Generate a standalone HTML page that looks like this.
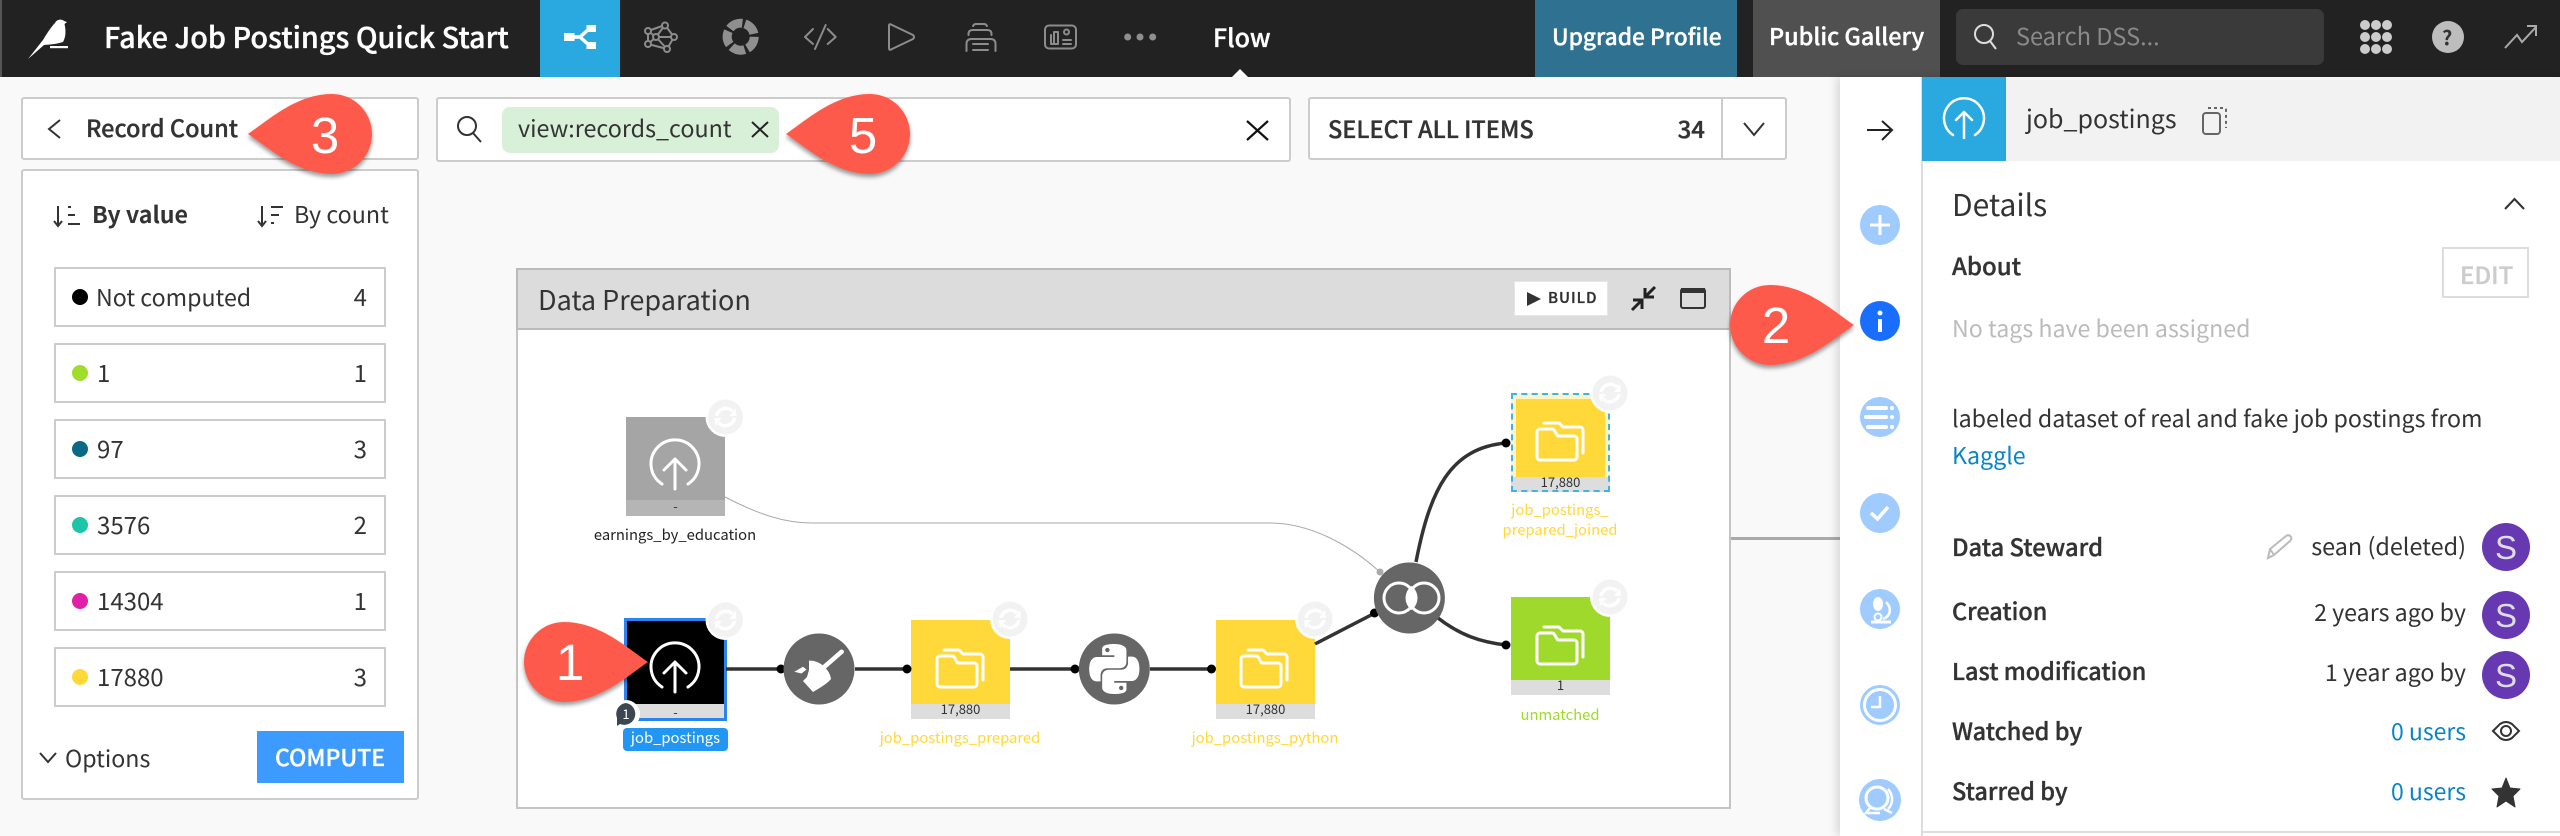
<!DOCTYPE html>
<html><head><meta charset="utf-8"><title>Fake Job Postings Quick Start</title>
<style>
html,body{margin:0;padding:0;width:2560px;height:836px;overflow:hidden;background:#f9f9f9}
body{position:relative;font-family:"Noto Sans CJK JP","Liberation Sans",sans-serif;color:#333}
.b{position:absolute;box-sizing:border-box}
.box{position:absolute;box-sizing:border-box;background:#fff;border:2px solid #ccc;border-radius:3px}
.t{position:absolute;white-space:nowrap;line-height:40px;height:40px}
.s{font-weight:500;-webkit-text-stroke:.35px currentColor}
.w{color:#fff}
svg{position:absolute;left:0;top:0}
.c{text-align:center;transform:translateX(-50%)}
.av{font-family:"Liberation Sans",sans-serif;font-size:33px;color:#ddd}
.l{font-size:14.8px}
</style></head><body>

<!-- header -->
<div class="b" style="left:0;top:0;width:2560px;height:77px;background:#222"></div>
<div class="b" style="left:0;top:0;width:2px;height:77px;background:#555"></div>
<div class="b" style="left:540px;top:0;width:80px;height:77px;background:#29a9df"></div>
<div class="b" style="left:1535px;top:0;width:202px;height:77px;background:#2e7191"></div>
<div class="b" style="left:1753px;top:0;width:187px;height:77px;background:#505050"></div>
<div class="b" style="left:1956px;top:9px;width:368px;height:56px;background:#3a3a3a;border-radius:7px"></div>

<!-- left panels -->
<div class="box" style="left:21px;top:97px;width:398px;height:63px"></div>
<div class="box" style="left:21px;top:169px;width:398px;height:631px"></div>
<div class="box" style="left:54px;top:267px;width:332px;height:60px;border-radius:0"></div>
<div class="box" style="left:54px;top:343px;width:332px;height:60px;border-radius:0"></div>
<div class="box" style="left:54px;top:419px;width:332px;height:60px;border-radius:0"></div>
<div class="box" style="left:54px;top:495px;width:332px;height:60px;border-radius:0"></div>
<div class="box" style="left:54px;top:571px;width:332px;height:60px;border-radius:0"></div>
<div class="box" style="left:54px;top:647px;width:332px;height:60px;border-radius:0"></div>
<div class="b" style="left:257px;top:731px;width:147px;height:52px;background:#3d9bff"></div>

<!-- top boxes -->
<div class="box" style="left:436px;top:97px;width:855px;height:65px"></div>
<div class="b" style="left:502px;top:107px;width:277px;height:46px;background:#d8f0d8;border-radius:8px"></div>
<div class="box" style="left:1308px;top:97px;width:479px;height:63px"></div>
<div class="b" style="left:1721px;top:98px;width:2px;height:61px;background:#ccc"></div>

<!-- flow zone -->
<div class="b" style="left:1730px;top:537px;width:110px;height:3px;background:#aaa"></div>
<div class="b" style="left:516px;top:268px;width:1215px;height:541px;background:#fff;border:2px solid #c4c4c4"></div>
<div class="b" style="left:516px;top:268px;width:1215px;height:62px;background:#dcdcdc;border:2px solid #bbb"></div>
<div class="b" style="left:1514px;top:281px;width:94px;height:35px;background:#fff;border:1px solid #e6e6e6"></div>

<!-- flow nodes -->
<div class="b" style="left:626px;top:417px;width:99px;height:83px;background:#a5a5a5"></div>
<div class="b" style="left:626px;top:500px;width:99px;height:16px;background:#b5b5b5"></div>
<div class="b" style="left:624px;top:618px;width:103px;height:103px;background:#ddd;border:3px solid #2b83f0"></div>
<div class="b" style="left:627px;top:621px;width:97px;height:83px;background:#000"></div>
<div class="b" style="left:911px;top:620px;width:99px;height:84px;background:#ffd83a"></div>
<div class="b" style="left:911px;top:704px;width:99px;height:15px;background:#ddd"></div>
<div class="b" style="left:1216px;top:620px;width:99px;height:84px;background:#ffd83a"></div>
<div class="b" style="left:1216px;top:704px;width:99px;height:15px;background:#ddd"></div>
<div class="b" style="left:1511px;top:393px;width:99px;height:99px;background:#fdf3c8"></div>
<div class="b" style="left:1516px;top:399px;width:89px;height:78px;background:#ffd83a"></div>
<div class="b" style="left:1511px;top:477px;width:99px;height:15px;background:#ddd"></div>
<div class="b" style="left:1511px;top:393px;width:99px;height:99px;border:2px dashed #3fb3e6"></div>
<div class="b" style="left:1511px;top:597px;width:99px;height:83px;background:#9fd92b"></div>
<div class="b" style="left:1511px;top:680px;width:99px;height:15px;background:#ddd"></div>
<div class="b" style="left:623px;top:728px;width:105px;height:23px;background:#2196f3;border-radius:4px"></div>

<!-- right panel -->
<div class="b" style="left:1840px;top:77px;width:720px;height:759px;background:#fff;box-shadow:-4px 0 8px rgba(0,0,0,.12)"></div>
<div class="b" style="left:1921px;top:77px;width:2px;height:759px;background:#ddd"></div>
<div class="b" style="left:1922px;top:77px;width:638px;height:84px;background:#f2f2f2"></div>
<div class="b" style="left:1922px;top:77px;width:84px;height:84px;background:#29a9df"></div>
<div class="b" style="left:2442px;top:247px;width:87px;height:51px;background:#fff;border:2px solid #ddd"></div>
<div class="b" style="left:1922px;top:831px;width:638px;height:2px;background:#ddd"></div>

<svg width="2560" height="836" viewBox="0 0 2560 836" fill="none">
<defs>
<filter id="sh" x="-20%" y="-20%" width="140%" height="140%"><feDropShadow dx="0" dy="3" stdDeviation="2" flood-color="#000" flood-opacity=".4"/></filter>
<g id="folder" fill="none" stroke="#fff" stroke-width="3" stroke-linejoin="round" stroke-linecap="round">
<path d="M26 40a3 3 0 0 1 3-3H41a3 3 0 0 1 2.5 1.5L46 43a2 2 0 0 0 2 1H63a3 3 0 0 1 3 3V65a3 3 0 0 1-3 3H29a3 3 0 0 1-3-3Z"/>
<path d="M33 31H47a3 3 0 0 1 2.5 1.5L52 35H69a3 3 0 0 1 3 3V61"/>
</g>
<g id="sync">
<circle r="20" fill="#fff"/><circle r="17.5" fill="#f2f2f2"/>
<path d="M-9 -1A9.5 9.5 0 0 1 7 -6M9 1A9.5 9.5 0 0 1 -7 6" stroke="#fff" stroke-width="3.5" fill="none"/>
<path d="M4 -1L11 -1L10 -9ZM-4 1L-11 1L-10 9Z" fill="#fff"/>
</g>
<g id="up" fill="none" stroke="#fff" stroke-width="3" stroke-linecap="round" stroke-linejoin="round">
<path d="M-13 18A24 24 0 1 1 13 18"/>
<path d="M0 23V-7M-11 4L0 -7L11 4"/>
</g>
<path id="bal" d="M84 0C62 -15 35 -40 0 -40A40 40 0 0 0 0 40C35 40 62 15 84 0Z" fill="#fe5a4c"/>
</defs>

<!-- logo -->
<path d="M28 59L43 40C47 33 52 26 55 23C57 19 62 19 64 21L67 22L64.5 24C66 30 66 37 63 42C57 44 50 44.500 44 45Z" fill="#fff"/>
<rect x="50" y="46" width="18" height="2.200" fill="#fff"/>

<!-- flow tab icon -->
<path d="M570 37H580L590 28M580 37L590 46" stroke="#fff" stroke-width="3.500"/>
<rect x="564" y="33" width="10.500" height="8" fill="#fff"/><rect x="586.500" y="25" width="9.500" height="7" fill="#fff"/><rect x="586.500" y="42" width="9.500" height="7" fill="#fff"/>

<!-- header icons -->
<g stroke="#8c8c8c" stroke-width="2" stroke-linejoin="round" stroke-linecap="round">
<path d="M648 31L665 25L674 37L667 49L648 44L648 31M656 37L665 25M656 37H674M656 37L667 49M656 37L648 31M656 37L648 44"/>
<g fill="#222"><circle cx="648" cy="31" r="3"/><circle cx="665" cy="25.500" r="3"/><circle cx="674" cy="37" r="3"/><circle cx="667" cy="49" r="3"/><circle cx="648" cy="44" r="3"/><circle cx="656" cy="37" r="3"/></g>
<path d="M813 29L805 37L813 44M827.700 29L835.700 37L827.700 44M825.700 25L815 49"/>
<path d="M889 26Q889 23 892 25L913 35Q915 37 913 39L892 49Q889 51 889 48Z"/>
<path d="M973 26Q974 24 976 24H984Q986 24 987 26M968.500 35V34Q968.500 30 972.500 30H987.500Q991.500 30 991.500 34V35M966.500 51V44Q966.500 39 971.500 39H990.500Q995.500 39 995.500 44V51M973 44H988M973 50H988"/>
<rect x="1045" y="25.500" width="31" height="23" rx="4"/>
<path d="M1051 35V44H1054M1054 44V32H1058V44H1051M1063 40H1071M1063 44H1071"/>
<circle cx="1066.500" cy="32" r="2.500"/>
</g>
<circle cx="740.700" cy="36.700" r="13.500" stroke="#8f8f8f" stroke-width="9" stroke-dasharray="14 2.960" transform="rotate(-72 740.700 36.700)"/>
<g fill="#8f8f8f"><circle cx="1127.700" cy="37" r="3.500"/><circle cx="1140" cy="37" r="3.500"/><circle cx="1152.700" cy="37" r="3.500"/></g>
<path d="M1232 77L1240 69L1248 77Z" fill="#fff"/>

<!-- right header icons -->
<circle cx="1984" cy="34" r="9" stroke="#ddd" stroke-width="2"/><path d="M1990 41L1996 49" stroke="#ddd" stroke-width="2"/>
<g fill="#ccc"><circle cx="2365" cy="25" r="5"/><circle cx="2376" cy="25" r="5"/><circle cx="2387" cy="25" r="5"/><circle cx="2365" cy="37" r="5"/><circle cx="2376" cy="37" r="5"/><circle cx="2387" cy="37" r="5"/><circle cx="2365" cy="49" r="5"/><circle cx="2376" cy="49" r="5"/><circle cx="2387" cy="49" r="5"/></g>
<circle cx="2448" cy="37" r="16" fill="#bdbdbd"/>
<path d="M2505 48L2517 35L2522 42L2536 27M2527 26H2536V36" stroke="#aaa" stroke-width="2"/>

<!-- toolbar icons -->
<path d="M60 120L49 129L60 138" stroke="#333" stroke-width="2"/>
<circle cx="467" cy="126" r="9" stroke="#333" stroke-width="2"/><path d="M473 133L481 142" stroke="#333" stroke-width="2"/>
<path d="M752 122L768 137M768 122L752 137" stroke="#222" stroke-width="2"/>
<path d="M1247 121L1268 140M1268 121L1247 140" stroke="#111" stroke-width="2.200"/>
<path d="M1744 123L1754 135L1764 123" stroke="#333" stroke-width="2"/>
<path d="M1867 130H1891M1882 121L1892 130L1882 140" stroke="#222" stroke-width="2"/>
<path d="M2505 209L2514.500 199L2524 209" stroke="#333" stroke-width="2"/>
<path d="M40 753L48 762L56 753" stroke="#333" stroke-width="2"/>

<!-- sort icons -->
<path d="M58 206V226M54 221L58 226L62 221M68 207H71M68 215H75M68 224H80" stroke="#333" stroke-width="2"/>
<path d="M262 206V226M258 221L262 226L266 221M271 207H283M271 215H279M271 223H274" stroke="#333" stroke-width="2"/>

<!-- legend dots -->
<circle cx="80" cy="297" r="8" fill="#000"/><circle cx="80" cy="373" r="8" fill="#a0dc2b"/><circle cx="80" cy="449" r="8" fill="#0a6a85"/><circle cx="80" cy="525" r="8" fill="#1cc5a8"/><circle cx="80" cy="601" r="8" fill="#e020a8"/><circle cx="80" cy="677" r="8" fill="#ffd83a"/>

<!-- zone toolbar -->
<path d="M1527 292L1541 299L1527 306Z" fill="#333"/>
<path d="M1655 287L1645 297M1645 288V297H1654M1632 310L1642 300M1633 300H1642V309" stroke="#222" stroke-width="3"/>
<rect x="1681" y="289" width="24" height="19" rx="2" stroke="#333" stroke-width="2"/><rect x="1681" y="288" width="24" height="5" fill="#333"/>

<!-- edges -->
<path d="M725 497C760 515 785 523 812 523H1270C1310 523 1350 545 1380 572" stroke="#aaa" stroke-width="1"/>
<circle cx="1380" cy="572" r="3.500" fill="#aaa"/>
<g stroke="#333" stroke-width="3.500">
<path d="M726 669H781M855 669H907M1010 669H1075M1150 669H1211M1315 644L1375 613"/>
<path d="M1416 562C1430 490 1450 448 1506 443"/>
<path d="M1438 618C1460 635 1480 642 1506 645"/>
</g>
<g fill="#000"><circle cx="781" cy="669" r="4.500"/><circle cx="907" cy="669" r="4.500"/><circle cx="1075" cy="669" r="4.500"/><circle cx="1211.500" cy="669" r="4.500"/><circle cx="1374.500" cy="613" r="4.500"/><circle cx="1506" cy="443" r="4.500"/><circle cx="1506" cy="645" r="4.500"/></g>

<!-- recipes -->
<circle cx="819" cy="669" r="35.500" fill="#666"/>
<path d="M823 668L841.700 651.700" stroke="#fff" stroke-width="4.500" stroke-linecap="round"/>
<path d="M809 660.700C820 660 830 670 831 679C827 684 818 689 813 692L803 681L807 677L809 670ZM794.300 671.700L803 666.700L806.500 669.500L801.500 673.500Z" fill="#fff"/>
<circle cx="1114.300" cy="669" r="35.500" fill="#666"/>
<g transform="translate(1089.300 644) scale(2.083)"><path fill="#fff" d="M14.250.18l.9.2.73.26.59.3.45.32.34.34.25.34.16.33.1.3.04.26.02.2-.01.13V8.500l-.05.63-.13.55-.21.46-.26.38-.3.31-.33.25-.35.19-.35.14-.33.1-.3.07-.26.04-.21.02H8.770l-.69.05-.59.14-.5.22-.41.27-.33.32-.27.35-.2.36-.15.37-.1.35-.07.32-.04.27-.02.21v3.060H3.170l-.21-.03-.28-.07-.32-.12-.35-.18-.36-.26-.36-.36-.35-.46-.32-.59-.28-.73-.21-.88-.14-1.050-.05-1.230.06-1.220.16-1.040.24-.87.32-.71.36-.57.4-.44.42-.33.42-.24.4-.16.36-.1.32-.05.24-.01h.16l.06.01h8.160v-.83H6.180l-.01-2.750-.02-.37.05-.34.11-.31.17-.28.25-.26.31-.23.38-.2.44-.18.51-.15.58-.12.64-.1.71-.06.77-.04.84-.02 1.270.05zm-6.300 1.980l-.23.33-.08.41.08.41.23.34.33.22.41.09.41-.09.33-.22.23-.34.08-.41-.08-.41-.23-.33-.33-.22-.41-.09-.41.09zm13.090 3.950l.28.06.32.12.35.18.36.27.36.35.35.47.32.59.28.73.21.88.14 1.040.05 1.230-.06 1.230-.16 1.040-.24.86-.32.71-.36.57-.4.45-.42.33-.42.24-.4.16-.36.09-.32.05-.24.02-.16-.01h-8.220v.82h5.840l.01 2.760.02.36-.05.34-.11.31-.17.29-.25.25-.31.24-.38.2-.44.17-.51.15-.58.13-.64.09-.71.07-.77.04-.84.01-1.270-.04-1.070-.14-.9-.2-.73-.25-.59-.3-.45-.33-.34-.34-.25-.34-.16-.33-.1-.3-.04-.25-.02-.2.01-.13v-5.340l.05-.64.13-.54.21-.46.26-.38.3-.32.33-.24.35-.2.35-.14.33-.1.3-.06.26-.04.21-.02.13-.01h5.840l.69-.05.59-.14.5-.21.41-.28.33-.32.27-.35.2-.36.15-.36.1-.35.07-.32.04-.28.02-.21V6.070h2.090l.14.01zm-6.470 14.250l-.23.33-.08.41.08.41.23.33.33.23.41.08.41-.08.33-.23.23-.33.08-.41-.08-.41-.23-.33-.33-.23-.41-.08-.41.08z"/></g>
<circle cx="1409.400" cy="598" r="35.500" fill="#666"/>
<path d="M1411.500 586A15 15 0 0 1 1411.500 610A15 15 0 0 1 1411.500 586Z" fill="#fff"/>
<circle cx="1399" cy="598" r="15" stroke="#fff" stroke-width="3"/><circle cx="1424" cy="598" r="15" stroke="#fff" stroke-width="3"/>

<!-- node icons -->
<use href="#up" x="675" y="466"/>
<use href="#up" x="675" y="669"/>
<use href="#folder" x="911" y="619"/>
<use href="#folder" x="1215" y="619"/>
<use href="#folder" x="1511" y="392"/>
<use href="#folder" x="1511" y="596"/>
<use href="#sync" x="725.500" y="417"/>
<use href="#sync" x="725.500" y="620"/>
<use href="#sync" x="1010" y="619"/>
<use href="#sync" x="1315" y="619"/>
<use href="#sync" x="1610" y="393"/>
<use href="#sync" x="1610" y="597"/>

<!-- comment badge -->
<circle cx="626" cy="714" r="14" fill="#fff"/>
<path d="M626 703A11 11 0 1 1 620 724L617 726L617 718A11 11 0 0 1 626 703Z" fill="#3c4650"/>

<!-- sidebar -->
<g fill="#9fcbff"><circle cx="1880" cy="225" r="20"/><circle cx="1880" cy="417" r="20"/><circle cx="1880" cy="513" r="20"/><circle cx="1880" cy="609" r="20"/><circle cx="1880" cy="705" r="20"/><circle cx="1880" cy="800" r="21"/></g>
<circle cx="1880" cy="321" r="20" fill="#1a6eff"/>
<path d="M1870 225H1890M1880 215V235" stroke="#fff" stroke-width="3"/>
<circle cx="1880" cy="313" r="2.500" fill="#fff"/><rect x="1878" y="319" width="4" height="13" fill="#fff"/>
<path d="M1868 408H1886M1866 417H1886M1868 427H1886M1892 408V408.100M1892 417V417.100M1892 427V427.100" stroke="#fff" stroke-width="4" stroke-linecap="round"/>
<path d="M1871 513L1877.500 519L1888 507" stroke="#fff" stroke-width="3.500"/>
<path d="M1871 622H1891" stroke="#fff" stroke-width="3"/>
<path d="M1886 602C1892 608 1891 616 1883 619" stroke="#fff" stroke-width="2.500"/>
<ellipse cx="1878" cy="604" rx="5" ry="7" fill="#fff"/><circle cx="1878" cy="617" r="3.500" stroke="#fff" stroke-width="2"/>
<circle cx="1880" cy="705" r="15.500" stroke="#fff" stroke-width="3"/><path d="M1880 696V707H1871" stroke="#fff" stroke-width="2.500"/>
<circle cx="1877" cy="798" r="11" stroke="#fff" stroke-width="3"/><path d="M1888 789C1894 796 1893 804 1888 809M1870 808L1866 813H1880M1884 809L1892 813" stroke="#fff" stroke-width="2.500"/>

<!-- details icons -->
<g stroke="#fff" stroke-width="2.500" stroke-linecap="round" stroke-linejoin="round">
<path d="M1953 135A20 20 0 1 1 1975 135"/><path d="M1964 138V112M1956 120L1964 112L1972 120"/>
</g>
<rect x="2203" y="113" width="17" height="21" rx="3" stroke="#666" stroke-width="2"/>
<path d="M2208 108H2224Q2226 108 2226 110V128" stroke="#666" stroke-width="2" stroke-dasharray="3 3"/>
<path d="M2268 558L2270 549L2286 536Q2289 534 2291 537Q2292 539 2290 541L2274 555ZM2270 549L2274 555" stroke="#bbb" stroke-width="2"/>
<path d="M2493 731L2500 724Q2506 720 2512 724L2519 731L2512 738Q2506 742 2500 738Z" stroke="#333" stroke-width="2"/>
<circle cx="2506" cy="731" r="5" stroke="#333" stroke-width="2"/>
<path d="M2506 778L2510 788L2520 789L2513 796L2515 807L2506 801L2497 807L2499 796L2492 789L2502 788Z" fill="#333" stroke="#333" stroke-width="1" stroke-linejoin="round"/>
<g fill="#6639b3"><circle cx="2506" cy="547" r="24"/><circle cx="2506" cy="615" r="24"/><circle cx="2506" cy="675" r="24"/></g>

<!-- balloons -->
<g filter="url(#sh)">
<use href="#bal" transform="translate(332 134) rotate(180)"/>
<use href="#bal" transform="translate(870 134) rotate(180)"/>
<use href="#bal" transform="translate(564 662)"/>
<use href="#bal" transform="translate(1770 325)"/>
</g>
<g font-family="'Liberation Sans',sans-serif" font-size="51" fill="#fff" text-anchor="middle">
<text x="325" y="153">3</text>
<text x="863" y="153">5</text>
<text x="570" y="680">1</text>
<text x="1776" y="343">2</text>
</g>
</svg>

<!-- header text -->
<div class="t w s" style="left:104px;top:17px;font-size:28.8px">Fake Job Postings Quick Start</div>
<div class="t w s" style="left:1213px;top:17px;font-size:25px">Flow</div>
<div class="t w s" style="left:1552px;top:16px;font-size:22.7px">Upgrade Profile</div>
<div class="t w s" style="left:1769px;top:15px;font-size:23.4px">Public Gallery</div>
<div class="t" style="left:2016px;top:15px;font-size:23.5px;color:#8a8a8a">Search DSS...</div>
<div class="t" style="left:2442px;top:17px;font-size:20px;font-weight:700;color:#333">?</div>

<!-- toolbar text -->
<div class="t s" style="left:86px;top:107px;font-size:23.5px">Record Count</div>
<div class="t" style="left:518px;top:107px;font-size:23.3px">view:records_count</div>
<div class="t s" style="left:1328px;top:108px;font-size:23.5px">SELECT ALL ITEMS</div>
<div class="t s" style="right:855px;top:108px;font-size:24px">34</div>

<!-- left panel text -->
<div class="t" style="left:92px;top:193px;font-size:23.2px;font-weight:700">By value</div>
<div class="t" style="left:294px;top:193px;font-size:23.3px">By count</div>
<div class="t" style="left:96px;top:276px;font-size:23.2px">Not computed</div><div class="t" style="right:2193px;top:276px;font-size:24px">4</div>
<div class="t" style="left:97px;top:352px;font-size:24px">1</div><div class="t" style="right:2193px;top:352px;font-size:24px">1</div>
<div class="t" style="left:97px;top:428px;font-size:24px">97</div><div class="t" style="right:2193px;top:428px;font-size:24px">3</div>
<div class="t" style="left:97px;top:504px;font-size:24px">3576</div><div class="t" style="right:2193px;top:504px;font-size:24px">2</div>
<div class="t" style="left:97px;top:580px;font-size:24px">14304</div><div class="t" style="right:2193px;top:580px;font-size:24px">1</div>
<div class="t" style="left:97px;top:656px;font-size:24px">17880</div><div class="t" style="right:2193px;top:656px;font-size:24px">3</div>
<div class="t" style="left:65px;top:737px;font-size:23.2px">Options</div>
<div class="t w s" style="left:275px;top:736px;font-size:23px">COMPUTE</div>

<!-- zone text -->
<div class="t" style="left:538px;top:279px;font-size:27px">Data Preparation</div>
<div class="t s" style="left:1548px;top:278px;font-size:15px;letter-spacing:1px">BUILD</div>

<!-- node labels -->
<div class="t c l" style="left:675px;top:515px;color:#222">earnings_by_education</div>
<div class="t c w l" style="left:675.500px;top:718px">job_postings</div>
<div class="t c l" style="left:960px;top:718px;color:#ffd83a">job_postings_prepared</div>
<div class="t c l" style="left:1265px;top:718px;color:#ffd83a">job_postings_python</div>
<div class="t c l" style="left:1560px;top:490px;color:#ffd83a">job_postings_</div>
<div class="t c l" style="left:1560px;top:510px;color:#ffd83a">prepared_joined</div>
<div class="t c l" style="left:1560px;top:695px;color:#9fd92b">unmatched</div>
<div class="t c" style="left:960.500px;top:689px;font-size:13px">17,880</div>
<div class="t c" style="left:1265.500px;top:689px;font-size:13px">17,880</div>
<div class="t c" style="left:1560.500px;top:462px;font-size:13px">17,880</div>
<div class="t c" style="left:1560.500px;top:665px;font-size:13px">1</div>
<div class="t c" style="left:675.500px;top:486px;font-size:13px">-</div>
<div class="t c" style="left:675.500px;top:692px;font-size:13px">-</div>
<div class="t c w" style="left:626px;top:694px;font-size:13px">1</div>

<!-- details text -->
<div class="t" style="left:2026px;top:98px;font-size:25px">job_postings</div>
<div class="t" style="left:1952px;top:183px;font-size:30px">Details</div>
<div class="t s" style="left:1952px;top:245px;font-size:24px">About</div>
<div class="t s" style="left:2460px;top:254px;font-size:24px;color:#ccc">EDIT</div>
<div class="t" style="left:1952px;top:307px;font-size:23.2px;color:#bbb">No tags have been assigned</div>
<div class="t" style="left:1952px;top:397px;font-size:23.2px">labeled dataset of real and fake job postings from</div>
<div class="t" style="left:1952px;top:434px;font-size:23.2px;color:#0a84c8">Kaggle</div>
<div class="t s" style="left:1952px;top:526px;font-size:23.7px">Data Steward</div>
<div class="t" style="right:94px;top:525px;font-size:23.4px">sean (deleted)</div>
<div class="t c av" style="left:2506px;top:528px">S</div>
<div class="t s" style="left:1952px;top:590px;font-size:23.4px">Creation</div>
<div class="t" style="right:94px;top:591px;font-size:23.2px">2 years ago by</div>
<div class="t c av" style="left:2506px;top:596px">S</div>
<div class="t s" style="left:1952px;top:650px;font-size:23.4px">Last modification</div>
<div class="t" style="right:94px;top:651px;font-size:23.2px">1 year ago by</div>
<div class="t c av" style="left:2506px;top:656px">S</div>
<div class="t s" style="left:1952px;top:710px;font-size:23.5px">Watched by</div>
<div class="t" style="right:94px;top:710px;font-size:23px;color:#0a84c8">0 users</div>
<div class="t s" style="left:1952px;top:770px;font-size:23.5px">Starred by</div>
<div class="t" style="right:94px;top:770px;font-size:23px;color:#0a84c8">0 users</div>
</body></html>
